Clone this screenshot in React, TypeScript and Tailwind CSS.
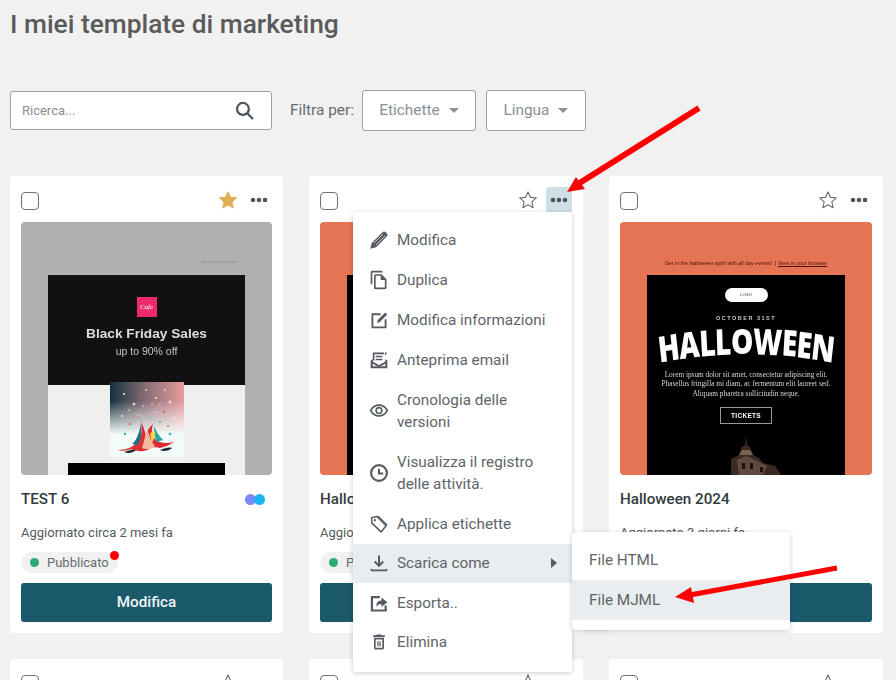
import type { ReactNode } from "react";

const iconClass = "h-[20px] w-[20px] shrink-0 text-[#555b60]";

function Svg({ children }: { children: ReactNode }) {
  return (
    <svg viewBox="0 0 24 24" fill="currentColor" className={iconClass}>
      {children}
    </svg>
  );
}

const PencilIcon = () => (
  <Svg>
    <path d="M16.500 2.400c.9-.9 2.400-.9 3.300 0l1.800 1.800c.9.9.9 2.400 0 3.300L8.500 20.700 1.500 22.500l1.800-7z" />
    <path d="M5.800 15.800 16.800 4.800M8.200 18.200 19.200 7.200" stroke="#fff" strokeWidth="0.8" fill="none" />
  </Svg>
);
const CopyIcon = () => (
  <Svg>
    <path d="M16 1H4c-1.100 0-2 .9-2 2v14h2V3h12V1zm-1 4H8c-1.100 0-1.990.9-1.990 2L6 21c0 1.100.89 2 1.990 2H19c1.100 0 2-.9 2-2V11l-6-6zM8 21V7h6v5h5v9H8z" />
  </Svg>
);
const InfoEditIcon = () => (
  <Svg>
    <path d="M14 4H3v18h18V11h-2.200v8.800H5.200V6.200H14z" />
    <path d="M9.500 15.500l1-3.500L19.500 3l2.500 2.500-9 9z" />
  </Svg>
);
const MailIcon = () => (
  <Svg>
    <path d="M2 12.500 4.500 11v8.500h15V11l2.500 1.500V22H2z" />
    <path d="M2.500 13 12 18l9.500-5v2.600L12 20.500l-9.500-4.900z" />
    <path d="M4.500 3H18v2H6.500v7.500h-2zM8 7h8v1.800H8zM8 10.500h8v1.800H8zM20 2.500l1.500 1-1.500 2.500-1.200-1z" />
  </Svg>
);
const EyeIcon = () => (
  <Svg>
    <path d="M12 6c3.790 0 7.170 2.130 8.820 5.500C19.170 14.870 15.790 17 12 17s-7.170-2.130-8.820-5.500C4.830 8.130 8.210 6 12 6m0-2C7 4 2.730 7.110 1 11.500 2.730 15.890 7 19 12 19s9.270-3.110 11-7.500C21.270 7.110 17 4 12 4zm0 5c1.380 0 2.500 1.120 2.500 2.500S13.380 14 12 14s-2.500-1.120-2.500-2.500S10.620 9 12 9m0-2c-2.480 0-4.500 2.020-4.500 4.500S9.520 16 12 16s4.500-2.020 4.500-4.500S14.480 7 12 7z" />
  </Svg>
);
const ClockIcon = () => (
  <Svg>
    <circle cx="12" cy="12" r="9.500" fill="none" stroke="currentColor" strokeWidth="2.600" />
    <path d="M12 7v5.500h5" fill="none" stroke="currentColor" strokeWidth="2.400" />
  </Svg>
);
const TagIcon = () => (
  <Svg>
    <path d="M3 4.500 9.500 3l11 11-6 7.500L3.500 11z" fill="none" stroke="currentColor" strokeWidth="1.800" strokeLinejoin="round" />
    <path d="M11 2.500l11 11" fill="none" stroke="currentColor" strokeWidth="1.500" />
    <circle cx="7" cy="7.500" r="1.400" />
  </Svg>
);
const DownloadIcon = () => (
  <Svg>
    <path d="M12 3v12M6.800 10.200l5.200 5.200 5.200-5.200" fill="none" stroke="currentColor" strokeWidth="2.400" />
    <path d="M2 19v1.500c0 .8.700 1.500 1.500 1.500h17c.8 0 1.500-.7 1.500-1.500V19h-1.500v.8h-17V19z" />
  </Svg>
);
const ExportIcon = () => (
  <Svg>
    <path d="M20 15v6H3.500V5H13" fill="none" stroke="currentColor" strokeWidth="2.600" />
    <path d="M9 16v-2c0-3 2.500-5 6-5V5.500l7 5.700-7 5.700v-3.700c-2.500 0-4.500.8-6 3.300z" />
  </Svg>
);
const TrashIcon = () => (
  <Svg>
    <path d="M16 9v10H8V9h8m-1.500-6h-5l-1 1H5v2h14V4h-3.500l-1-1zM18 7H6v12c0 1.100.9 2 2 2h8c1.100 0 2-.9 2-2V7z" />
    <path d="M10 11h1.500v6H10zM12.500 11H14v6h-1.500z" />
  </Svg>
);

function Star({ filled }: { filled?: boolean }) {
  return (
    <svg viewBox="0 0 24 24" className="h-[20px] w-[20px]">
      <path
        d="M12 2.300l2.900 6.500 7 .7-5.300 4.700 1.500 7-6.100-3.600-6.100 3.600 1.500-7-5.300-4.700 7-.7z"
        fill={filled ? "#e0ad55" : "#fff"}
        stroke={filled ? "#e0ad55" : "#6b7075"}
        strokeWidth="1.400"
        strokeLinejoin="round"
      />
    </svg>
  );
}

function Dots() {
  return (
    <svg viewBox="0 0 18 6" className="h-[6px] w-[18px] text-[#4d565e]" fill="currentColor">
      <circle cx="3" cy="3" r="2.300" />
      <circle cx="9" cy="3" r="2.300" />
      <circle cx="15" cy="3" r="2.300" />
    </svg>
  );
}

function CardHeader({ filled, active }: { filled?: boolean; active?: boolean }) {
  return (
    <div className="flex h-[35px] items-start justify-between">
      <span className="mt-[5px] h-[18px] w-[18px] rounded-[4px] border border-[#6f7478] bg-white" />
      <div className="flex items-center">
        <Star filled={filled} />
        <span
          className={
            active
              ? "ml-[8px] flex h-[26px] w-[26px] items-center justify-center rounded-[3px] bg-[#cfdfe6]"
              : "ml-[8px] flex h-[26px] w-[26px] items-center justify-center"
          }
        >
          <Dots />
        </span>
      </div>
    </div>
  );
}

function Splash() {
  return (
    <svg viewBox="0 0 74 75" className="h-[75px] w-[74px]">
      <defs>
        <linearGradient id="splash-bg" x1="0" y1="0" x2="1" y2="0">
          <stop offset="0" stopColor="#12313c" />
          <stop offset="0.5" stopColor="#8a6f78" />
          <stop offset="1" stopColor="#e79b9e" />
        </linearGradient>
        <linearGradient id="splash-fade" x1="0" y1="0" x2="0" y2="1">
          <stop offset="0.25" stopColor="#fff" stopOpacity="0" />
          <stop offset="0.7" stopColor="#f1fbf8" stopOpacity="1" />
        </linearGradient>
      </defs>
      <rect width="74" height="75" fill="url(#splash-bg)" />
      <rect width="74" height="75" fill="url(#splash-fade)" />
      <path d="M8 68c10 0 18-4 22-12 2-5 2-10 1-16 3 5 4 10 5 14 1-5 3-9 7-12-2 6-1 12 3 16 4 3 10 4 18 2-4 3-9 5-14 6-4-1-6-1-9 0-3 2-8 4-13 3-4-1-7-2-10-1-4 1-8 1-10 0z" fill="#d92f35" />
      <path d="M32 66c2-6 3-12 5-20 2 8 5 14 8 19-3 2-9 3-13 1z" fill="#f3b9a0" />
      <path d="M22 62c4-3 7-10 9-20 1 8 0 15-3 21z" fill="#1d6f8a" />
      <path d="M46 60c-1-6-2-10-2-16 2 5 5 10 9 14z" fill="#29a5a2" />
      <path d="M40 52c2-3 4-4 5-2 0 5-1 8-3 10z" fill="#f5d548" />
      <path d="M14 70c4-1 8-3 12-2-3 3-8 4-12 2zM50 68c5-2 9-3 12-2-3 3-8 4-12 2z" fill="#1c2a33" />
      <path d="M37 46c0-8 2-12 6-16 3-3 6-6 8-10M36 42c-1-5-3-8-7-12M43 30c3 1 5 0 8-2M31 34c-3-1-5-1-7-3" fill="none" stroke="#d9c6bc" strokeWidth="0.700" />
      <g fill="#f0dcc8">
        <circle cx="14" cy="12" r="1.100" />
        <circle cx="24" cy="22" r="1.300" />
        <circle cx="46" cy="16" r="1.100" />
        <circle cx="60" cy="20" r="1.400" />
        <circle cx="36" cy="8" r="0.900" />
        <circle cx="55" cy="8" r="1" />
        <circle cx="64" cy="36" r="1.200" />
        <circle cx="12" cy="34" r="1.100" />
        <circle cx="33" cy="24" r="0.800" />
        <circle cx="19" cy="28" r="0.800" />
        <circle cx="42" cy="22" r="0.800" />
      </g>
      <g fill="#e45b4f">
        <circle cx="20" cy="42" r="1.100" />
        <circle cx="54" cy="30" r="1.100" />
        <circle cx="30" cy="16" r="0.900" />
        <circle cx="58" cy="44" r="0.900" />
      </g>
      <g fill="#2fb5ae">
        <circle cx="60" cy="52" r="1.300" />
        <circle cx="50" cy="40" r="1" />
        <circle cx="15" cy="52" r="1.200" />
        <circle cx="40" cy="36" r="0.800" />
      </g>
    </svg>
  );
}

function BlackFridayEmail() {
  return (
    <div className="h-[253px] overflow-hidden rounded-[4px] bg-[#b0b0b0] font-['Liberation_Sans',sans-serif] blur-[0.3px]">
      <p className="h-[53px] pt-[37px] pr-[36px] text-right text-[4px] text-[#8c8c8c]">View online version</p>
      <div className="mx-[27px] bg-[#efefef]">
        <div className="flex h-[110px] flex-col items-center bg-[#111111] pt-[22px] text-[#dedede]">
          <span className="flex h-[20px] w-[20px] items-center justify-center bg-[#ef2a6c] font-['Liberation_Serif',serif] text-[7px] italic text-white">
            Cafe
          </span>
          <p className="mt-[8px] text-[13.700px] leading-[18px] font-bold">Black Friday Sales</p>
          <p className="text-[10.500px] leading-[16px] text-[#c4c4c4]">up to 90% off</p>
        </div>
        <div className="-mt-[3px] flex justify-center">
          <Splash />
        </div>
        <div className="mx-[20px] mt-[6px] h-[14px] bg-black" />
      </div>
    </div>
  );
}

function House() {
  return (
    <svg viewBox="0 0 80 40" className="h-[40px] w-[80px]">
      <path d="M14 40V24l8-4 3-8 3-2 1-9 1 9 3 2 3 8 6 3 4 5 12 3 6 9z" fill="#3b2a24" />
      <path d="M20 25l9-4 9 4 12 6-4 9H22z" fill="#5f4a40" />
      <path d="M25 15h8l3 5H22z" fill="#7a6154" />
      <path d="M25 28h3v6h-3zM33 28h3v6h-3zM43 32h3v5h-3z" fill="#1a110e" />
    </svg>
  );
}

const halloweenLetters = [
  { letter: "H", className: "inline-block translate-y-[6px] -rotate-[8deg]" },
  { letter: "A", className: "inline-block translate-y-[3px] -rotate-[6deg]" },
  { letter: "L", className: "inline-block translate-y-[1px] -rotate-[4deg]" },
  { letter: "L", className: "inline-block -rotate-[2deg]" },
  { letter: "O", className: "inline-block -translate-y-[1px]" },
  { letter: "W", className: "inline-block rotate-[2deg]" },
  { letter: "E", className: "inline-block translate-y-[1px] rotate-[4deg]" },
  { letter: "E", className: "inline-block translate-y-[3px] rotate-[6deg]" },
  { letter: "N", className: "inline-block translate-y-[6px] rotate-[8deg]" },
];

function HalloweenEmail() {
  return (
    <div className="h-[253px] overflow-hidden rounded-[4px] bg-[#e47453] blur-[0.3px]">
      <p className="flex h-[53px] items-end justify-center pb-[7px] font-['Liberation_Sans',sans-serif] text-[5.300px] whitespace-pre text-[#4d1408]">
        Get in the halloween spirit with all day events!  | <span className="underline">View in your browser</span>
      </p>
      <div className="mx-[27px] flex h-[200px] flex-col items-center bg-black text-white">
        <span className="mt-[13px] flex h-[14px] w-[43px] items-center justify-center rounded-full bg-white font-['Liberation_Sans',sans-serif] text-[4px] text-[#333]">
          LOGO
        </span>
        <p className="mt-[12px] font-['Liberation_Sans',sans-serif] text-[5.500px] leading-[8px] font-bold tracking-[1.500px] text-[#c9c9c9]">
          OCTOBER 31ST
        </p>
        <p className="mt-[2px] flex h-[36px] items-center font-['Open_Sans',sans-serif] text-[36px] leading-[36px] font-extrabold tracking-[-0.500px] [transform:scaleX(0.78)]">
          {halloweenLetters.map((item, index) => (
            <span key={index} className={item.className}>
              {item.letter}
            </span>
          ))}
        </p>
        <p className="mt-[10px] text-center font-['Liberation_Serif',serif] text-[7.300px] leading-[9.300px] text-[#d8d8d8]">
          Lorem ipsum dolor sit amet, consectetur adipiscing elit.
          <br />
          Phasellus fringilla mi diam, ac fermentum elit laoreet sed.
          <br />
          Aliquam pharetra sollicitudin neque.
        </p>
        <span className="mt-[9px] flex h-[17px] w-[52px] items-center justify-center border border-[#9a9a9a] font-['Liberation_Sans',sans-serif] text-[6.500px] font-bold tracking-[0.300px]">
          TICKETS
        </span>
        <div className="mt-[11px] ml-[22px]">
          <House />
        </div>
      </div>
    </div>
  );
}

function CardFooter({ title, updated, brand }: { title: string; updated: string; brand?: boolean }) {
  return (
    <>
      <div className="mt-[14px] flex h-[20px] items-center justify-between pr-[7px]">
        <h3 className="text-[15.200px] font-medium text-[#333a40]">{title}</h3>
        {brand && (
          <span className="flex">
            <span className="h-[11px] w-[11px] rounded-full bg-[#7b86f8]" />
            <span className="-ml-[2px] h-[11px] w-[11px] rounded-full bg-[#1ab4ef]" />
          </span>
        )}
      </div>
      <p className="mt-[15px] text-[13px] leading-[18px] text-[#555a5e]">{updated}</p>
      <div className="relative mt-[10px] flex h-[21px] w-[97px] items-center rounded-full bg-[#f1f1f1] pl-[9px] text-[13px] text-[#666b6e]">
        <span className="mr-[8px] h-[9px] w-[9px] rounded-full bg-[#2baa76]" />
        Pubblicato
        <span className="absolute top-[-1px] right-[-1px] h-[9px] w-[9px] rounded-full bg-[#ff0000]" />
      </div>
      <button className="mt-[10px] h-[39px] w-full rounded-[3px] bg-[#1b5a6b] text-[15.200px] font-medium text-[#eef5f7]">
        Modifica
      </button>
    </>
  );
}

function MenuRow({
  icon,
  label,
  loose,
  active,
  children,
}: {
  icon: ReactNode;
  label: ReactNode;
  loose?: boolean;
  active?: boolean;
  children?: ReactNode;
}) {
  return (
    <div
      className={`relative flex items-center gap-[8px] pr-[14px] pl-[16px] text-[15.300px] leading-[22.500px] text-[#5f6468] ${
        loose ? "py-[8.750px]" : "py-[8.500px]"
      } ${active ? "bg-[#e8edef]" : ""}`}
    >
      {icon}
      <span className="flex-1">{label}</span>
      {children}
    </div>
  );
}

function ContextMenu() {
  return (
    <div className="absolute top-[36px] left-[44px] z-10 w-[219px] rounded-[3px] bg-white pt-[8px] pb-[10px] shadow-[0_1px_5px_rgba(0,0,0,0.22)]">
      <MenuRow loose icon={<PencilIcon />} label="Modifica" />
      <MenuRow loose icon={<CopyIcon />} label="Duplica" />
      <MenuRow loose icon={<InfoEditIcon />} label="Modifica informazioni" />
      <MenuRow loose icon={<MailIcon />} label="Anteprima email" />
      <MenuRow icon={<EyeIcon />} label={<>Cronologia delle<br />versioni</>} />
      <MenuRow icon={<ClockIcon />} label={<>Visualizza il registro<br />delle attività.</>} />
      <MenuRow icon={<TagIcon />} label="Applica etichette" />
      <MenuRow active icon={<DownloadIcon />} label="Scarica come">
        <span className="mr-[1px] h-0 w-0 border-y-[5px] border-l-[6px] border-y-transparent border-l-[#555b60]" />
        <div className="absolute top-[-11.500px] left-full w-[218px] rounded-[3px] bg-white pt-[8px] pb-[10px] shadow-[0_1px_5px_rgba(0,0,0,0.22)]">
          <p className="py-[8.750px] pl-[17px]">File HTML</p>
          <p className="bg-[#e8edef] py-[8.750px] pl-[17px]">File MJML</p>
        </div>
      </MenuRow>
      <MenuRow icon={<ExportIcon />} label="Esporta.." />
      <MenuRow icon={<TrashIcon />} label="Elimina" />
    </div>
  );
}

function Caret() {
  return <span className="ml-[9px] h-0 w-0 border-x-[5px] border-t-[5px] border-x-transparent border-t-[#8a9095]" />;
}

export default function App() {
  return (
    <div className="relative h-[680px] w-[896px] overflow-hidden bg-[#f1f1f1] font-['Roboto',sans-serif]">
      <h1 className="pt-[8px] pl-[10px] text-[26.300px] leading-[32px] font-medium text-[#5a5a5a]">
        I miei template di marketing
      </h1>

      <div className="mt-[50px] flex items-center pl-[10px]">
        <div className="flex h-[39px] w-[262px] items-center justify-between rounded-[3px] border border-[#9aa0a4] bg-white pr-[17px] pl-[11px] text-[13px] text-[#8a8f93]">
          Ricerca...
          <svg viewBox="0 0 24 24" className="h-[19px] w-[19px] text-[#4d565e]" fill="none" stroke="currentColor" strokeWidth="2.800">
            <circle cx="10" cy="10" r="7.500" />
            <path d="M15.500 15.500 22 22" strokeLinecap="round" />
          </svg>
        </div>
        <span className="ml-[18px] text-[15.400px] text-[#666b6e]">Filtra per:</span>
        <button className="ml-[8px] flex h-[41px] w-[114px] items-center justify-center rounded-[3px] border border-[#9aa0a4] bg-white text-[15.400px] text-[#8a9095]">
          Etichette
          <Caret />
        </button>
        <button className="ml-[10px] flex h-[41px] w-[100px] items-center justify-center rounded-[3px] border border-[#9aa0a4] bg-white text-[15.400px] text-[#8a9095]">
          Lingua
          <Caret />
        </button>
      </div>

      <div className="mt-[45px] grid grid-cols-[273px_274px_274px] gap-x-[26px] gap-y-[26px] pl-[10px]">
        <div className="rounded-[3px] bg-white p-[11px]">
          <CardHeader filled />
          <BlackFridayEmail />
          <CardFooter title="TEST 6" updated="Aggiornato circa 2 mesi fa" brand />
        </div>
        <div className="relative rounded-[3px] bg-white p-[11px]">
          <CardHeader active />
          <HalloweenEmail />
          <CardFooter title="Halloween" updated="Aggiornato 3 giorni fa" />
          <ContextMenu />
        </div>
        <div className="rounded-[3px] bg-white p-[11px]">
          <CardHeader />
          <HalloweenEmail />
          <CardFooter title="Halloween 2024" updated="Aggiornato 3 giorni fa" />
        </div>
        <div className="rounded-[3px] bg-white p-[11px]">
          <CardHeader />
        </div>
        <div className="rounded-[3px] bg-white p-[11px]">
          <CardHeader />
        </div>
        <div className="rounded-[3px] bg-white p-[11px]">
          <CardHeader />
        </div>
      </div>

      {/* red annotation arrows */}
      <svg viewBox="0 0 896 680" className="pointer-events-none absolute top-0 left-0 z-20 h-[680px] w-[896px]">
        <path d="M699 108 578 184" stroke="#ff0000" strokeWidth="6" fill="none" />
        <path d="M567 192 576 177 585 189z" fill="#ff0000" />
        <path d="M837 568 690 595" stroke="#ff0000" strokeWidth="5" fill="none" />
        <path d="M675 597 691 587 694 603z" fill="#ff0000" />
      </svg>
    </div>
  );
}
